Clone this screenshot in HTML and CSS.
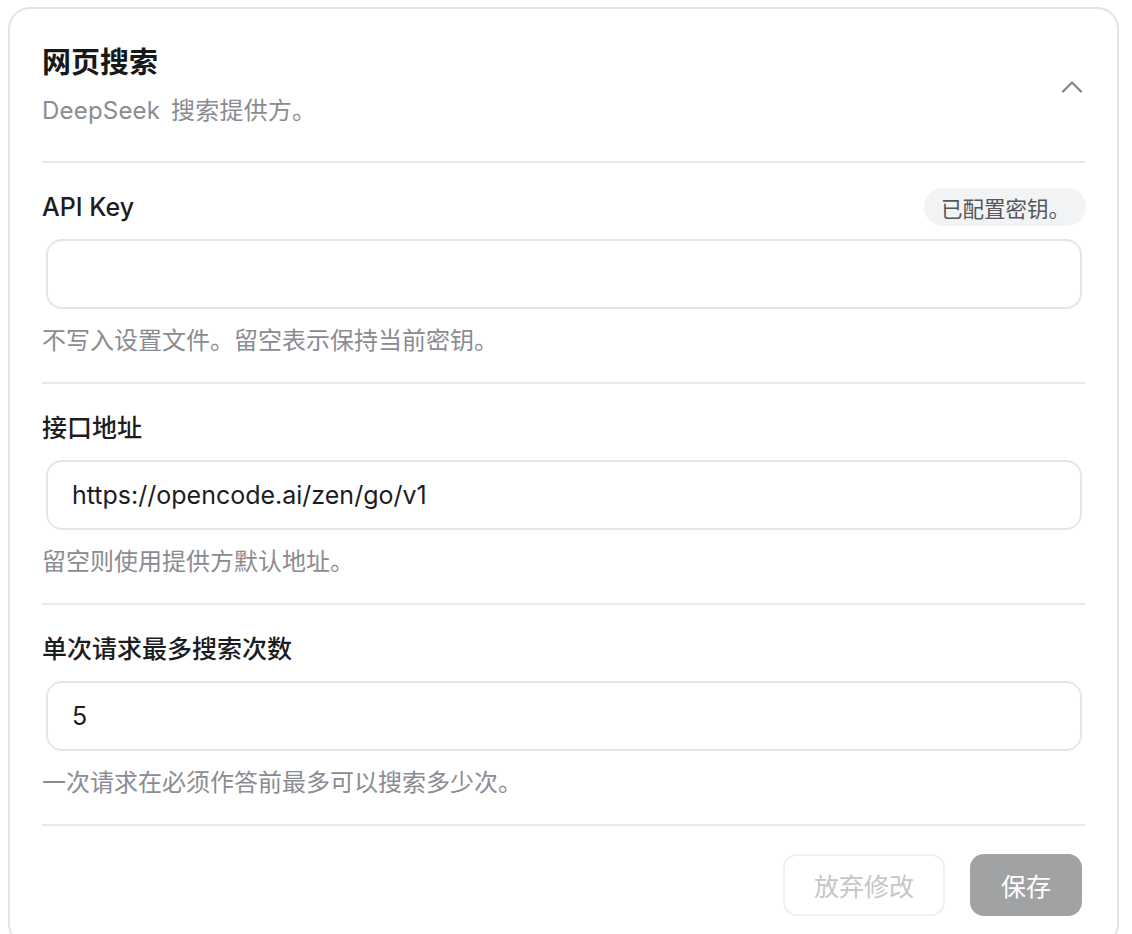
FILE: index.html
```html
<!DOCTYPE html>
<html lang="zh-CN">
<head>
<meta charset="utf-8">
<title>网页搜索</title>
<link rel="stylesheet" href="styles.css">
</head>
<body>
  <section class="card">
    <header class="card-head">
      <div class="head-text">
        <h2 class="title">网页搜索</h2>
        <p class="subtitle">DeepSeek 搜索提供方。</p>
      </div>
      <button class="collapse" type="button" aria-label="收起">
        <svg width="22" height="14" viewBox="0 0 22 14" fill="none" stroke="currentColor" stroke-width="2" stroke-linecap="round" stroke-linejoin="round"><polyline points="2,11.5 11,2.5 20,11.5"/></svg>
      </button>
    </header>

    <div class="field-group">
      <div class="field-row">
        <label class="label" for="api-key">API Key</label>
        <span class="badge">已配置密钥。</span>
      </div>
      <input class="input" id="api-key" type="password" value="">
      <p class="hint">不写入设置文件。留空表示保持当前密钥。</p>
    </div>

    <div class="field-group">
      <div class="field-row">
        <label class="label" for="base-url">接口地址</label>
      </div>
      <input class="input" id="base-url" type="text" value="https://opencode.ai/zen/go/v1">
      <p class="hint">留空则使用提供方默认地址。</p>
    </div>

    <div class="field-group">
      <div class="field-row">
        <label class="label" for="max-searches">单次请求最多搜索次数</label>
      </div>
      <input class="input" id="max-searches" type="text" value="5">
      <p class="hint">一次请求在必须作答前最多可以搜索多少次。</p>
    </div>

    <footer class="actions">
      <button class="btn btn-ghost" type="button" disabled>放弃修改</button>
      <button class="btn btn-primary" type="button" disabled>保存</button>
    </footer>
  </section>
</body>
</html>
```

FILE: styles.css
```css
* {
  box-sizing: border-box;
}

html, body {
  background: #ffffff;
}

body {
  margin: 0;
  padding: 7px 13px 0 8px;
  font-family: "Inter", "Noto Sans CJK SC", sans-serif;
  color: #1c1d1f;
}

.card {
  border: 2px solid #e3e4eb;
  border-radius: 22px;
  padding: 34px 32px 28px 32px;
  background: #ffffff;
}

/* header */
.card-head {
  display: flex;
  align-items: center;
  justify-content: space-between;
  padding-bottom: 34px;
}

.title {
  margin: 0;
  font-size: 29px;
  line-height: 40px;
  font-weight: 600;
  color: #17181a;
}

.subtitle {
  margin: 12px 0 0;
  font-size: 24px;
  line-height: 32px;
  color: #8a8c92;
  letter-spacing: 0.2px;
  word-spacing: 4px;
}

.collapse {
  display: flex;
  align-items: center;
  justify-content: center;
  margin: 4px 2px 0 0;
  padding: 0;
  border: 0;
  background: none;
  color: #7a7d84;
}

/* form sections */
.field-group {
  border-top: 2px solid #e9e9eb;
  padding: 25px 0 25px;
}

.field-row {
  display: flex;
  align-items: center;
  justify-content: space-between;
  height: 38px;
}

.label {
  font-size: 25px;
  line-height: 38px;
  font-weight: 500;
  color: #1c1d1f;
}

.badge {
  display: inline-flex;
  align-items: center;
  height: 38px;
  margin-right: -1px;
  padding: 0 16px 0 17px;
  border-radius: 19px;
  background: #f2f3f5;
  color: #55575c;
  font-size: 21.5px;
}

.input {
  display: block;
  width: calc(100% - 7px);
  height: 70px;
  margin: 13px 0 0 4px;
  padding: 0 24px;
  border: 2px solid #e6e6e8;
  border-radius: 16px;
  background: #ffffff;
  font-family: "Inter", "Noto Sans CJK SC", sans-serif;
  font-size: 25px;
  color: #1d1d1f;
  outline: none;
}

.hint {
  margin: 16px 0 0;
  font-size: 24px;
  line-height: 32px;
  color: #8a8c92;
}

/* footer buttons */
.actions {
  display: flex;
  justify-content: flex-end;
  gap: 25px;
  border-top: 2px solid #e9e9eb;
  padding: 28px 3px 0 0;
}

.btn {
  height: 62px;
  padding: 0 29px;
  border-radius: 14px;
  font-family: "Inter", "Noto Sans CJK SC", sans-serif;
  font-size: 25px;
}

.btn-ghost {
  border: 2px solid #f0f0f1;
  background: #ffffff;
  color: #c6c6c8;
}

.btn-primary {
  border: 2px solid #a1a2a4;
  background: #a1a2a4;
  color: #ffffff;
}
```
